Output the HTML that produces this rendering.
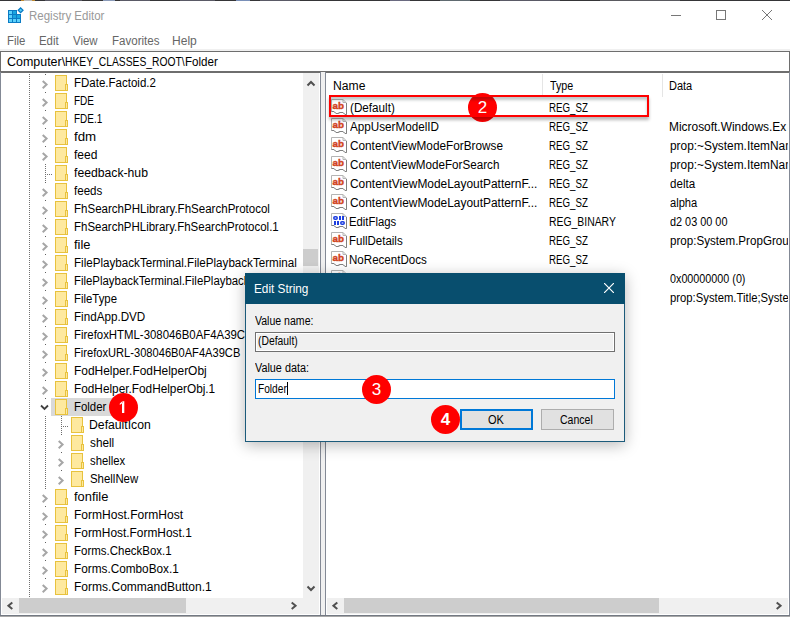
<!DOCTYPE html>
<html><head><meta charset="utf-8">
<style>
*{margin:0;padding:0;box-sizing:border-box}
html,body{width:790px;height:617px;overflow:hidden;background:#fff}
body{position:relative;font-family:"Liberation Sans",sans-serif;font-size:12px;color:#000}
.a{position:absolute}
.t{position:absolute;white-space:nowrap;line-height:14px;transform-origin:0 0}
</style></head><body>
<div class="a" style="left:0;top:0;width:790px;height:1px;background:#353537"></div>
<div class="a" style="left:21px;top:0;width:3px;height:1px;background:#c08a30"></div>
<div class="a" style="left:24px;top:0;width:8px;height:1px;background:#b8b8b8"></div>
<div class="a" style="left:32px;top:0;width:3px;height:1px;background:#c08a30"></div>
<div class="a" style="left:45px;top:0;width:37px;height:1px;background:#5a5a66"></div>
<div class="a" style="left:103px;top:0;width:12px;height:1px;background:#8a9ab8"></div>
<div class="a" style="left:120px;top:0;width:30px;height:1px;background:#5a5a66"></div>
<div class="a" style="left:180px;top:0;width:35px;height:1px;background:#5a5a66"></div>
<div class="a" style="left:236px;top:0;width:14px;height:1px;background:#7a90b8"></div>
<div class="a" style="left:260px;top:0;width:40px;height:1px;background:#5a5a66"></div>
<div class="a" style="left:390px;top:0;width:20px;height:1px;background:#6a6a80"></div>
<div class="a" style="left:440px;top:0;width:30px;height:1px;background:#606a70"></div>
<div class="a" style="left:500px;top:0;width:60px;height:1px;background:#5a5a66"></div>
<div class="a" style="left:600px;top:0;width:80px;height:1px;background:#5a5a60"></div>
<svg class="a" style="left:0;top:0" width="30" height="30" viewBox="0 0 30 30" shape-rendering="crispEdges">
<path d="M8 10H17V14H21V23H8Z" fill="#0b7bc4"/>
<g fill="#5bd0fa"><rect x="9" y="11" width="3" height="3"/><rect x="9" y="15" width="3" height="3"/><rect x="9" y="19" width="3" height="3"/><rect x="13" y="19" width="3" height="3"/><rect x="17" y="19" width="3" height="3"/></g>
<g fill="#1aa6e0"><rect x="13" y="11" width="3" height="3"/><rect x="13" y="15" width="3" height="3"/><rect x="17" y="15" width="3" height="3"/></g>
</svg>
<svg class="a" style="left:0;top:0" width="30" height="30" viewBox="0 0 30 30"><path d="M20.6 7.9L23 10.3L20.6 12.7L18.2 10.3Z" fill="#5bd0fa" stroke="#0b7bc4" stroke-width="1.3"/></svg>
<div class="t" style="left:29.04px;top:9px;font-size:12px;color:#999;transform:scaleX(0.9577);">Registry Editor</div>
<div class="a" style="left:671px;top:15px;width:10px;height:1px;background:#777"></div>
<div class="a" style="left:716px;top:10px;width:10px;height:10px;border:1px solid #777"></div>
<svg class="a" style="left:762px;top:10px" width="10" height="10"><path d="M0 0L10 10M10 0L0 10" stroke="#777" stroke-width="1"/></svg>
<div class="t" style="left:6.65px;top:34px;font-size:12px;color:#666;transform:scaleX(0.9500);">File</div>
<div class="t" style="left:38.95px;top:34px;font-size:12px;color:#666;transform:scaleX(0.9500);">Edit</div>
<div class="t" style="left:73.40px;top:34px;font-size:12px;color:#666;transform:scaleX(0.9500);">View</div>
<div class="t" style="left:111.74px;top:34px;font-size:12px;color:#666;transform:scaleX(0.9625);">Favorites</div>
<div class="t" style="left:172.40px;top:34px;font-size:12px;color:#666;transform:scaleX(1.0042);">Help</div>
<div class="a" style="left:0;top:49px;width:790px;height:2px;background:#f0f0f0"></div>
<div class="a" style="left:0;top:51px;width:790px;height:22px;border:1px solid #6e6e6e;border-bottom:2px solid #6e6e6e"></div>
<div class="t" style="left:6.70px;top:55px;font-size:12px;color:#000;transform:scaleX(1.0375);">Computer\</div>
<div class="t" style="left:65.34px;top:55px;font-size:12px;color:#000;transform:scaleX(0.8583);">HKEY_CLASSES_ROOT\</div>
<div class="t" style="left:185.33px;top:55px;font-size:12px;color:#000;transform:scaleX(0.9667);">Folder</div>
<div class="a" style="left:0;top:72px;width:321px;height:545px;border-left:1px solid #838995;border-right:1px solid #838995"></div>
<div class="a" style="left:321px;top:72px;width:4px;height:545px;background:#f0f0f0"></div>
<div class="a" style="left:325px;top:72px;width:465px;height:545px;border-left:1px solid #838995;border-right:1px solid #838995"></div>
<div class="a" style="left:0;top:615px;width:790px;height:1px;background:#737983"></div><div class="a" style="left:0;top:616px;width:790px;height:1px;background:#a8a8a8"></div>
<div class="a" style="left:29px;top:74px;width:1px;height:523px;background:repeating-linear-gradient(#707070 0 1px,transparent 1px 2px)"></div>
<div class="a" style="left:45px;top:74px;width:1px;height:1px;background:#606060"></div>
<svg class="a" style="left:42px;top:80px" width="8" height="10"><path d="M0.7 0.9L4.6 4.6L0.7 8.3" stroke="#a6a6a6" stroke-width="2" fill="none"/></svg>
<svg class="a" style="left:55px;top:75px" width="13" height="16" viewBox="0 0 13 16"><rect x="0.5" y="0.5" width="11" height="15" fill="#fee99f" stroke="#e8c23e"/><rect x="10.5" y="9.5" width="2" height="6" fill="#fee99f" stroke="#e8c23e"/></svg>
<div class="t" style="left:73.54px;top:76px;font-size:12px;color:#000;transform:scaleX(0.9595);">FDate.Factoid.2</div>
<div class="a" style="left:45px;top:92px;width:1px;height:1px;background:#606060"></div>
<svg class="a" style="left:42px;top:98px" width="8" height="10"><path d="M0.7 0.9L4.6 4.6L0.7 8.3" stroke="#a6a6a6" stroke-width="2" fill="none"/></svg>
<svg class="a" style="left:55px;top:93px" width="13" height="16" viewBox="0 0 13 16"><rect x="0.5" y="0.5" width="11" height="15" fill="#fee99f" stroke="#e8c23e"/><rect x="10.5" y="9.5" width="2" height="6" fill="#fee99f" stroke="#e8c23e"/></svg>
<div class="t" style="left:73.67px;top:94px;font-size:12px;color:#000;transform:scaleX(0.8348);">FDE</div>
<div class="a" style="left:45px;top:110px;width:1px;height:1px;background:#606060"></div>
<svg class="a" style="left:42px;top:116px" width="8" height="10"><path d="M0.7 0.9L4.6 4.6L0.7 8.3" stroke="#a6a6a6" stroke-width="2" fill="none"/></svg>
<svg class="a" style="left:55px;top:111px" width="13" height="16" viewBox="0 0 13 16"><rect x="0.5" y="0.5" width="11" height="15" fill="#fee99f" stroke="#e8c23e"/><rect x="10.5" y="9.5" width="2" height="6" fill="#fee99f" stroke="#e8c23e"/></svg>
<div class="t" style="left:73.67px;top:112px;font-size:12px;color:#000;transform:scaleX(0.8303);">FDE.1</div>
<div class="a" style="left:45px;top:128px;width:1px;height:1px;background:#606060"></div>
<svg class="a" style="left:42px;top:134px" width="8" height="10"><path d="M0.7 0.9L4.6 4.6L0.7 8.3" stroke="#a6a6a6" stroke-width="2" fill="none"/></svg>
<svg class="a" style="left:55px;top:129px" width="13" height="16" viewBox="0 0 13 16"><rect x="0.5" y="0.5" width="11" height="15" fill="#fee99f" stroke="#e8c23e"/><rect x="10.5" y="9.5" width="2" height="6" fill="#fee99f" stroke="#e8c23e"/></svg>
<div class="t" style="left:73.60px;top:130px;font-size:12px;color:#000;transform:scaleX(1.1100);">fdm</div>
<div class="a" style="left:45px;top:146px;width:1px;height:1px;background:#606060"></div>
<svg class="a" style="left:42px;top:152px" width="8" height="10"><path d="M0.7 0.9L4.6 4.6L0.7 8.3" stroke="#a6a6a6" stroke-width="2" fill="none"/></svg>
<svg class="a" style="left:55px;top:147px" width="13" height="16" viewBox="0 0 13 16"><rect x="0.5" y="0.5" width="11" height="15" fill="#fee99f" stroke="#e8c23e"/><rect x="10.5" y="9.5" width="2" height="6" fill="#fee99f" stroke="#e8c23e"/></svg>
<div class="t" style="left:73.60px;top:148px;font-size:12px;color:#000;transform:scaleX(1.0043);">feed</div>
<div class="a" style="left:45px;top:164px;width:1px;height:19px;background:repeating-linear-gradient(#707070 0 1px,transparent 1px 2px)"></div>
<div class="a" style="left:47px;top:174px;width:6px;height:1px;background:repeating-linear-gradient(90deg,#707070 0 1px,transparent 1px 2px)"></div>
<svg class="a" style="left:55px;top:165px" width="13" height="16" viewBox="0 0 13 16"><rect x="0.5" y="0.5" width="11" height="15" fill="#fee99f" stroke="#e8c23e"/><rect x="10.5" y="9.5" width="2" height="6" fill="#fee99f" stroke="#e8c23e"/></svg>
<div class="t" style="left:73.60px;top:166px;font-size:12px;color:#000;transform:scaleX(1.0164);">feedback-hub</div>
<div class="a" style="left:45px;top:182px;width:1px;height:1px;background:#606060"></div>
<svg class="a" style="left:42px;top:188px" width="8" height="10"><path d="M0.7 0.9L4.6 4.6L0.7 8.3" stroke="#a6a6a6" stroke-width="2" fill="none"/></svg>
<svg class="a" style="left:55px;top:183px" width="13" height="16" viewBox="0 0 13 16"><rect x="0.5" y="0.5" width="11" height="15" fill="#fee99f" stroke="#e8c23e"/><rect x="10.5" y="9.5" width="2" height="6" fill="#fee99f" stroke="#e8c23e"/></svg>
<div class="t" style="left:73.60px;top:184px;font-size:12px;color:#000;transform:scaleX(0.9655);">feeds</div>
<div class="a" style="left:45px;top:200px;width:1px;height:1px;background:#606060"></div>
<svg class="a" style="left:42px;top:206px" width="8" height="10"><path d="M0.7 0.9L4.6 4.6L0.7 8.3" stroke="#a6a6a6" stroke-width="2" fill="none"/></svg>
<svg class="a" style="left:55px;top:201px" width="13" height="16" viewBox="0 0 13 16"><rect x="0.5" y="0.5" width="11" height="15" fill="#fee99f" stroke="#e8c23e"/><rect x="10.5" y="9.5" width="2" height="6" fill="#fee99f" stroke="#e8c23e"/></svg>
<div class="t" style="left:73.54px;top:202px;font-size:12px;color:#000;transform:scaleX(0.9611);">FhSearchPHLibrary.FhSearchProtocol</div>
<div class="a" style="left:45px;top:218px;width:1px;height:1px;background:#606060"></div>
<svg class="a" style="left:42px;top:224px" width="8" height="10"><path d="M0.7 0.9L4.6 4.6L0.7 8.3" stroke="#a6a6a6" stroke-width="2" fill="none"/></svg>
<svg class="a" style="left:55px;top:219px" width="13" height="16" viewBox="0 0 13 16"><rect x="0.5" y="0.5" width="11" height="15" fill="#fee99f" stroke="#e8c23e"/><rect x="10.5" y="9.5" width="2" height="6" fill="#fee99f" stroke="#e8c23e"/></svg>
<div class="t" style="left:73.54px;top:220px;font-size:12px;color:#000;transform:scaleX(0.9573);">FhSearchPHLibrary.FhSearchProtocol.1</div>
<div class="a" style="left:45px;top:236px;width:1px;height:1px;background:#606060"></div>
<svg class="a" style="left:42px;top:242px" width="8" height="10"><path d="M0.7 0.9L4.6 4.6L0.7 8.3" stroke="#a6a6a6" stroke-width="2" fill="none"/></svg>
<svg class="a" style="left:55px;top:237px" width="13" height="16" viewBox="0 0 13 16"><rect x="0.5" y="0.5" width="11" height="15" fill="#fee99f" stroke="#e8c23e"/><rect x="10.5" y="9.5" width="2" height="6" fill="#fee99f" stroke="#e8c23e"/></svg>
<div class="t" style="left:73.60px;top:238px;font-size:12px;color:#000;transform:scaleX(1.0733);">file</div>
<div class="a" style="left:45px;top:254px;width:1px;height:1px;background:#606060"></div>
<svg class="a" style="left:42px;top:260px" width="8" height="10"><path d="M0.7 0.9L4.6 4.6L0.7 8.3" stroke="#a6a6a6" stroke-width="2" fill="none"/></svg>
<svg class="a" style="left:55px;top:255px" width="13" height="16" viewBox="0 0 13 16"><rect x="0.5" y="0.5" width="11" height="15" fill="#fee99f" stroke="#e8c23e"/><rect x="10.5" y="9.5" width="2" height="6" fill="#fee99f" stroke="#e8c23e"/></svg>
<div class="t" style="left:73.53px;top:256px;font-size:12px;color:#000;transform:scaleX(0.9686);">FilePlaybackTerminal.FilePlaybackTerminal</div>
<div class="a" style="left:45px;top:272px;width:1px;height:1px;background:#606060"></div>
<svg class="a" style="left:42px;top:278px" width="8" height="10"><path d="M0.7 0.9L4.6 4.6L0.7 8.3" stroke="#a6a6a6" stroke-width="2" fill="none"/></svg>
<svg class="a" style="left:55px;top:273px" width="13" height="16" viewBox="0 0 13 16"><rect x="0.5" y="0.5" width="11" height="15" fill="#fee99f" stroke="#e8c23e"/><rect x="10.5" y="9.5" width="2" height="6" fill="#fee99f" stroke="#e8c23e"/></svg>
<div class="t" style="left:73.55px;top:274px;font-size:12px;color:#000;transform:scaleX(0.9500);">FilePlaybackTerminal.FilePlaybackTerminal.1</div>
<div class="a" style="left:45px;top:290px;width:1px;height:1px;background:#606060"></div>
<svg class="a" style="left:42px;top:296px" width="8" height="10"><path d="M0.7 0.9L4.6 4.6L0.7 8.3" stroke="#a6a6a6" stroke-width="2" fill="none"/></svg>
<svg class="a" style="left:55px;top:291px" width="13" height="16" viewBox="0 0 13 16"><rect x="0.5" y="0.5" width="11" height="15" fill="#fee99f" stroke="#e8c23e"/><rect x="10.5" y="9.5" width="2" height="6" fill="#fee99f" stroke="#e8c23e"/></svg>
<div class="t" style="left:73.55px;top:292px;font-size:12px;color:#000;transform:scaleX(0.9477);">FileType</div>
<div class="a" style="left:45px;top:308px;width:1px;height:1px;background:#606060"></div>
<svg class="a" style="left:42px;top:314px" width="8" height="10"><path d="M0.7 0.9L4.6 4.6L0.7 8.3" stroke="#a6a6a6" stroke-width="2" fill="none"/></svg>
<svg class="a" style="left:55px;top:309px" width="13" height="16" viewBox="0 0 13 16"><rect x="0.5" y="0.5" width="11" height="15" fill="#fee99f" stroke="#e8c23e"/><rect x="10.5" y="9.5" width="2" height="6" fill="#fee99f" stroke="#e8c23e"/></svg>
<div class="t" style="left:73.53px;top:310px;font-size:12px;color:#000;transform:scaleX(0.9708);">FindApp.DVD</div>
<div class="a" style="left:45px;top:326px;width:1px;height:1px;background:#606060"></div>
<svg class="a" style="left:42px;top:332px" width="8" height="10"><path d="M0.7 0.9L4.6 4.6L0.7 8.3" stroke="#a6a6a6" stroke-width="2" fill="none"/></svg>
<svg class="a" style="left:55px;top:327px" width="13" height="16" viewBox="0 0 13 16"><rect x="0.5" y="0.5" width="11" height="15" fill="#fee99f" stroke="#e8c23e"/><rect x="10.5" y="9.5" width="2" height="6" fill="#fee99f" stroke="#e8c23e"/></svg>
<div class="t" style="left:73.55px;top:328px;font-size:12px;color:#000;transform:scaleX(0.9500);">FirefoxHTML-308046B0AF4A39CB</div>
<div class="a" style="left:45px;top:344px;width:1px;height:1px;background:#606060"></div>
<svg class="a" style="left:42px;top:350px" width="8" height="10"><path d="M0.7 0.9L4.6 4.6L0.7 8.3" stroke="#a6a6a6" stroke-width="2" fill="none"/></svg>
<svg class="a" style="left:55px;top:345px" width="13" height="16" viewBox="0 0 13 16"><rect x="0.5" y="0.5" width="11" height="15" fill="#fee99f" stroke="#e8c23e"/><rect x="10.5" y="9.5" width="2" height="6" fill="#fee99f" stroke="#e8c23e"/></svg>
<div class="t" style="left:73.57px;top:346px;font-size:12px;color:#000;transform:scaleX(0.9270);">FirefoxURL-308046B0AF4A39CB</div>
<div class="a" style="left:45px;top:362px;width:1px;height:1px;background:#606060"></div>
<svg class="a" style="left:42px;top:368px" width="8" height="10"><path d="M0.7 0.9L4.6 4.6L0.7 8.3" stroke="#a6a6a6" stroke-width="2" fill="none"/></svg>
<svg class="a" style="left:55px;top:363px" width="13" height="16" viewBox="0 0 13 16"><rect x="0.5" y="0.5" width="11" height="15" fill="#fee99f" stroke="#e8c23e"/><rect x="10.5" y="9.5" width="2" height="6" fill="#fee99f" stroke="#e8c23e"/></svg>
<div class="t" style="left:73.51px;top:364px;font-size:12px;color:#000;transform:scaleX(0.9947);">FodHelper.FodHelperObj</div>
<div class="a" style="left:45px;top:380px;width:1px;height:1px;background:#606060"></div>
<svg class="a" style="left:42px;top:386px" width="8" height="10"><path d="M0.7 0.9L4.6 4.6L0.7 8.3" stroke="#a6a6a6" stroke-width="2" fill="none"/></svg>
<svg class="a" style="left:55px;top:381px" width="13" height="16" viewBox="0 0 13 16"><rect x="0.5" y="0.5" width="11" height="15" fill="#fee99f" stroke="#e8c23e"/><rect x="10.5" y="9.5" width="2" height="6" fill="#fee99f" stroke="#e8c23e"/></svg>
<div class="t" style="left:73.52px;top:382px;font-size:12px;color:#000;transform:scaleX(0.9845);">FodHelper.FodHelperObj.1</div>
<div class="a" style="left:51px;top:398px;width:64px;height:18px;background:#d9d9d9"></div>
<div class="a" style="left:45px;top:398px;width:1px;height:1px;background:#606060"></div>
<svg class="a" style="left:40px;top:404px" width="10" height="8"><path d="M1 1.5L4.5 5L8 1.5" stroke="#404040" stroke-width="1.8" fill="none"/></svg>
<svg class="a" style="left:55px;top:399px" width="13" height="16" viewBox="0 0 13 16"><rect x="0.5" y="0.5" width="11" height="15" fill="#fee99f" stroke="#e8c23e"/><rect x="10.5" y="9.5" width="2" height="6" fill="#fee99f" stroke="#e8c23e"/></svg>
<div class="t" style="left:73.55px;top:400px;font-size:12px;color:#000;transform:scaleX(0.9500);">Folder</div>
<div class="a" style="left:61px;top:416px;width:1px;height:19px;background:repeating-linear-gradient(#707070 0 1px,transparent 1px 2px)"></div>
<div class="a" style="left:63px;top:426px;width:6px;height:1px;background:repeating-linear-gradient(90deg,#707070 0 1px,transparent 1px 2px)"></div>
<div class="a" style="left:45px;top:416px;width:1px;height:19px;background:repeating-linear-gradient(#707070 0 1px,transparent 1px 2px)"></div>
<svg class="a" style="left:71px;top:417px" width="13" height="16" viewBox="0 0 13 16"><rect x="0.5" y="0.5" width="11" height="15" fill="#fee99f" stroke="#e8c23e"/><rect x="10.5" y="9.5" width="2" height="6" fill="#fee99f" stroke="#e8c23e"/></svg>
<div class="t" style="left:89.28px;top:418px;font-size:12px;color:#000;transform:scaleX(1.0186);">DefaultIcon</div>
<div class="a" style="left:61px;top:434px;width:1px;height:1px;background:#606060"></div>
<svg class="a" style="left:58px;top:440px" width="8" height="10"><path d="M0.7 0.9L4.6 4.6L0.7 8.3" stroke="#a6a6a6" stroke-width="2" fill="none"/></svg>
<div class="a" style="left:45px;top:434px;width:1px;height:19px;background:repeating-linear-gradient(#707070 0 1px,transparent 1px 2px)"></div>
<svg class="a" style="left:71px;top:435px" width="13" height="16" viewBox="0 0 13 16"><rect x="0.5" y="0.5" width="11" height="15" fill="#fee99f" stroke="#e8c23e"/><rect x="10.5" y="9.5" width="2" height="6" fill="#fee99f" stroke="#e8c23e"/></svg>
<div class="t" style="left:90.30px;top:436px;font-size:12px;color:#000;transform:scaleX(0.9792);">shell</div>
<div class="a" style="left:61px;top:452px;width:1px;height:1px;background:#606060"></div>
<svg class="a" style="left:58px;top:458px" width="8" height="10"><path d="M0.7 0.9L4.6 4.6L0.7 8.3" stroke="#a6a6a6" stroke-width="2" fill="none"/></svg>
<div class="a" style="left:45px;top:452px;width:1px;height:19px;background:repeating-linear-gradient(#707070 0 1px,transparent 1px 2px)"></div>
<svg class="a" style="left:71px;top:453px" width="13" height="16" viewBox="0 0 13 16"><rect x="0.5" y="0.5" width="11" height="15" fill="#fee99f" stroke="#e8c23e"/><rect x="10.5" y="9.5" width="2" height="6" fill="#fee99f" stroke="#e8c23e"/></svg>
<div class="t" style="left:90.30px;top:454px;font-size:12px;color:#000;transform:scaleX(0.9405);">shellex</div>
<div class="a" style="left:61px;top:470px;width:1px;height:1px;background:#606060"></div>
<svg class="a" style="left:58px;top:476px" width="8" height="10"><path d="M0.7 0.9L4.6 4.6L0.7 8.3" stroke="#a6a6a6" stroke-width="2" fill="none"/></svg>
<div class="a" style="left:45px;top:470px;width:1px;height:19px;background:repeating-linear-gradient(#707070 0 1px,transparent 1px 2px)"></div>
<svg class="a" style="left:71px;top:471px" width="13" height="16" viewBox="0 0 13 16"><rect x="0.5" y="0.5" width="11" height="15" fill="#fee99f" stroke="#e8c23e"/><rect x="10.5" y="9.5" width="2" height="6" fill="#fee99f" stroke="#e8c23e"/></svg>
<div class="t" style="left:90.30px;top:472px;font-size:12px;color:#000;transform:scaleX(0.9510);">ShellNew</div>
<div class="a" style="left:45px;top:488px;width:1px;height:1px;background:#606060"></div>
<svg class="a" style="left:42px;top:494px" width="8" height="10"><path d="M0.7 0.9L4.6 4.6L0.7 8.3" stroke="#a6a6a6" stroke-width="2" fill="none"/></svg>
<svg class="a" style="left:55px;top:489px" width="13" height="16" viewBox="0 0 13 16"><rect x="0.5" y="0.5" width="11" height="15" fill="#fee99f" stroke="#e8c23e"/><rect x="10.5" y="9.5" width="2" height="6" fill="#fee99f" stroke="#e8c23e"/></svg>
<div class="t" style="left:73.60px;top:490px;font-size:12px;color:#000;transform:scaleX(1.0719);">fonfile</div>
<div class="a" style="left:45px;top:506px;width:1px;height:1px;background:#606060"></div>
<svg class="a" style="left:42px;top:512px" width="8" height="10"><path d="M0.7 0.9L4.6 4.6L0.7 8.3" stroke="#a6a6a6" stroke-width="2" fill="none"/></svg>
<svg class="a" style="left:55px;top:507px" width="13" height="16" viewBox="0 0 13 16"><rect x="0.5" y="0.5" width="11" height="15" fill="#fee99f" stroke="#e8c23e"/><rect x="10.5" y="9.5" width="2" height="6" fill="#fee99f" stroke="#e8c23e"/></svg>
<div class="t" style="left:73.50px;top:508px;font-size:12px;color:#000;transform:scaleX(1.0037);">FormHost.FormHost</div>
<div class="a" style="left:45px;top:524px;width:1px;height:1px;background:#606060"></div>
<svg class="a" style="left:42px;top:530px" width="8" height="10"><path d="M0.7 0.9L4.6 4.6L0.7 8.3" stroke="#a6a6a6" stroke-width="2" fill="none"/></svg>
<svg class="a" style="left:55px;top:525px" width="13" height="16" viewBox="0 0 13 16"><rect x="0.5" y="0.5" width="11" height="15" fill="#fee99f" stroke="#e8c23e"/><rect x="10.5" y="9.5" width="2" height="6" fill="#fee99f" stroke="#e8c23e"/></svg>
<div class="t" style="left:73.51px;top:526px;font-size:12px;color:#000;transform:scaleX(0.9924);">FormHost.FormHost.1</div>
<div class="a" style="left:45px;top:542px;width:1px;height:1px;background:#606060"></div>
<svg class="a" style="left:42px;top:548px" width="8" height="10"><path d="M0.7 0.9L4.6 4.6L0.7 8.3" stroke="#a6a6a6" stroke-width="2" fill="none"/></svg>
<svg class="a" style="left:55px;top:543px" width="13" height="16" viewBox="0 0 13 16"><rect x="0.5" y="0.5" width="11" height="15" fill="#fee99f" stroke="#e8c23e"/><rect x="10.5" y="9.5" width="2" height="6" fill="#fee99f" stroke="#e8c23e"/></svg>
<div class="t" style="left:73.54px;top:544px;font-size:12px;color:#000;transform:scaleX(0.9574);">Forms.CheckBox.1</div>
<div class="a" style="left:45px;top:560px;width:1px;height:1px;background:#606060"></div>
<svg class="a" style="left:42px;top:566px" width="8" height="10"><path d="M0.7 0.9L4.6 4.6L0.7 8.3" stroke="#a6a6a6" stroke-width="2" fill="none"/></svg>
<svg class="a" style="left:55px;top:561px" width="13" height="16" viewBox="0 0 13 16"><rect x="0.5" y="0.5" width="11" height="15" fill="#fee99f" stroke="#e8c23e"/><rect x="10.5" y="9.5" width="2" height="6" fill="#fee99f" stroke="#e8c23e"/></svg>
<div class="t" style="left:73.52px;top:562px;font-size:12px;color:#000;transform:scaleX(0.9821);">Forms.ComboBox.1</div>
<div class="a" style="left:45px;top:578px;width:1px;height:1px;background:#606060"></div>
<svg class="a" style="left:42px;top:584px" width="8" height="10"><path d="M0.7 0.9L4.6 4.6L0.7 8.3" stroke="#a6a6a6" stroke-width="2" fill="none"/></svg>
<svg class="a" style="left:55px;top:579px" width="13" height="16" viewBox="0 0 13 16"><rect x="0.5" y="0.5" width="11" height="15" fill="#fee99f" stroke="#e8c23e"/><rect x="10.5" y="9.5" width="2" height="6" fill="#fee99f" stroke="#e8c23e"/></svg>
<div class="t" style="left:74.30px;top:580px;font-size:12px;color:#000;transform:scaleX(1.0029);">Forms.CommandButton.1</div>
<div class="a" style="left:303px;top:73px;width:16px;height:541px;background:#f0f0f0"></div>
<div class="a" style="left:303px;top:249px;width:15px;height:17px;background:#cdcdcd"></div>
<svg class="a" style="left:306px;top:79px" width="10" height="8"><path d="M1.5 6.5L5 3L8.5 6.5" stroke="#505050" stroke-width="2" fill="none"/></svg>
<svg class="a" style="left:306px;top:585px" width="10" height="8"><path d="M1.5 1.5L5 5L8.5 1.5" stroke="#505050" stroke-width="2" fill="none"/></svg>
<div class="a" style="left:2px;top:598px;width:301px;height:16px;background:#f0f0f0"></div>
<div class="a" style="left:19px;top:598px;width:167px;height:15px;background:#cdcdcd"></div>
<svg class="a" style="left:6px;top:601px" width="8" height="10"><path d="M6.3 1.5L2.4 4.8L6.3 8.1" stroke="#505050" stroke-width="2" fill="none"/></svg>
<svg class="a" style="left:290px;top:601px" width="8" height="10"><path d="M1.7 1.5L5.6 4.8L1.7 8.1" stroke="#505050" stroke-width="2" fill="none"/></svg>
<div class="t" style="left:332.59px;top:79px;font-size:12px;color:#000;transform:scaleX(1.0129);">Name</div>
<div class="t" style="left:549.60px;top:79px;font-size:12px;color:#000;transform:scaleX(0.8923);">Type</div>
<div class="t" style="left:668.68px;top:79px;font-size:12px;color:#000;transform:scaleX(0.9160);">Data</div>
<div class="a" style="left:542px;top:74px;width:1px;height:23px;background:#e5e5e5"></div>
<div class="a" style="left:662px;top:74px;width:1px;height:23px;background:#e5e5e5"></div>
<svg class="a" style="left:331px;top:99px" width="16" height="16" viewBox="0 0 16 16"><path d="M0.5 12.5V0.5H12L15.5 4V15.5H14L12 13.5H9L7 14.5H5L3 12.5Z" fill="#fff" stroke="#b4b4b4"/><path d="M12 0.5V3.5H15" fill="none" stroke="#b4b4b4"/><path d="M0.5 12.5H3L5 14.5H7L9 13.5H12L14 15.5H15.5V4" fill="none" stroke="#808080"/><text x="1.6" y="10.2" font-family="Liberation Sans" font-weight="bold" font-size="9.8" fill="#d0441e" stroke="#d0441e" stroke-width="0.45">ab</text></svg>
<div class="t" style="left:349.80px;top:101px;font-size:12px;color:#000;transform:scaleX(0.9739);">(Default)</div>
<div class="t" style="left:548.79px;top:101px;font-size:12px;color:#000;transform:scaleX(0.8106);">REG_SZ</div>
<svg class="a" style="left:331px;top:118px" width="16" height="16" viewBox="0 0 16 16"><path d="M0.5 12.5V0.5H12L15.5 4V15.5H14L12 13.5H9L7 14.5H5L3 12.5Z" fill="#fff" stroke="#b4b4b4"/><path d="M12 0.5V3.5H15" fill="none" stroke="#b4b4b4"/><path d="M0.5 12.5H3L5 14.5H7L9 13.5H12L14 15.5H15.5V4" fill="none" stroke="#808080"/><text x="1.6" y="10.2" font-family="Liberation Sans" font-weight="bold" font-size="9.8" fill="#d0441e" stroke="#d0441e" stroke-width="0.45">ab</text></svg>
<div class="t" style="left:349.80px;top:120px;font-size:12px;color:#000;transform:scaleX(0.9736);">AppUserModelID</div>
<div class="t" style="left:548.79px;top:120px;font-size:12px;color:#000;transform:scaleX(0.8106);">REG_SZ</div>
<div class="a" style="left:663px;top:116px;width:125px;height:18px;overflow:hidden">
<div class="t" style="left:5.61px;top:4px;font-size:12px;color:#000;transform:scaleX(0.9932);">Microsoft.Windows.Ex<span style="margin-left:1.5px">plorer</span></div>
</div>
<svg class="a" style="left:331px;top:137px" width="16" height="16" viewBox="0 0 16 16"><path d="M0.5 12.5V0.5H12L15.5 4V15.5H14L12 13.5H9L7 14.5H5L3 12.5Z" fill="#fff" stroke="#b4b4b4"/><path d="M12 0.5V3.5H15" fill="none" stroke="#b4b4b4"/><path d="M0.5 12.5H3L5 14.5H7L9 13.5H12L14 15.5H15.5V4" fill="none" stroke="#808080"/><text x="1.6" y="10.2" font-family="Liberation Sans" font-weight="bold" font-size="9.8" fill="#d0441e" stroke="#d0441e" stroke-width="0.45">ab</text></svg>
<div class="t" style="left:349.80px;top:139px;font-size:12px;color:#000;transform:scaleX(0.9814);">ContentViewModeForBrowse</div>
<div class="t" style="left:548.79px;top:139px;font-size:12px;color:#000;transform:scaleX(0.8106);">REG_SZ</div>
<div class="a" style="left:663px;top:135px;width:125px;height:18px;overflow:hidden">
<div class="t" style="left:6.60px;top:4px;font-size:12px;color:#000;transform:scaleX(0.9897);">prop:~System.ItemNameDisplay</div>
</div>
<svg class="a" style="left:331px;top:156px" width="16" height="16" viewBox="0 0 16 16"><path d="M0.5 12.5V0.5H12L15.5 4V15.5H14L12 13.5H9L7 14.5H5L3 12.5Z" fill="#fff" stroke="#b4b4b4"/><path d="M12 0.5V3.5H15" fill="none" stroke="#b4b4b4"/><path d="M0.5 12.5H3L5 14.5H7L9 13.5H12L14 15.5H15.5V4" fill="none" stroke="#808080"/><text x="1.6" y="10.2" font-family="Liberation Sans" font-weight="bold" font-size="9.8" fill="#d0441e" stroke="#d0441e" stroke-width="0.45">ab</text></svg>
<div class="t" style="left:349.80px;top:158px;font-size:12px;color:#000;transform:scaleX(0.9708);">ContentViewModeForSearch</div>
<div class="t" style="left:548.79px;top:158px;font-size:12px;color:#000;transform:scaleX(0.8106);">REG_SZ</div>
<div class="a" style="left:663px;top:154px;width:125px;height:18px;overflow:hidden">
<div class="t" style="left:6.60px;top:4px;font-size:12px;color:#000;transform:scaleX(0.9897);">prop:~System.ItemNameDisplay</div>
</div>
<svg class="a" style="left:331px;top:175px" width="16" height="16" viewBox="0 0 16 16"><path d="M0.5 12.5V0.5H12L15.5 4V15.5H14L12 13.5H9L7 14.5H5L3 12.5Z" fill="#fff" stroke="#b4b4b4"/><path d="M12 0.5V3.5H15" fill="none" stroke="#b4b4b4"/><path d="M0.5 12.5H3L5 14.5H7L9 13.5H12L14 15.5H15.5V4" fill="none" stroke="#808080"/><text x="1.6" y="10.2" font-family="Liberation Sans" font-weight="bold" font-size="9.8" fill="#d0441e" stroke="#d0441e" stroke-width="0.45">ab</text></svg>
<div class="t" style="left:349.80px;top:177px;font-size:12px;color:#000;transform:scaleX(0.9936);">ContentViewModeLayoutPatternF...</div>
<div class="t" style="left:548.79px;top:177px;font-size:12px;color:#000;transform:scaleX(0.8106);">REG_SZ</div>
<div class="a" style="left:663px;top:173px;width:125px;height:18px;overflow:hidden">
<div class="t" style="left:6.60px;top:4px;font-size:12px;color:#000;transform:scaleX(0.9654);">delta</div>
</div>
<svg class="a" style="left:331px;top:194px" width="16" height="16" viewBox="0 0 16 16"><path d="M0.5 12.5V0.5H12L15.5 4V15.5H14L12 13.5H9L7 14.5H5L3 12.5Z" fill="#fff" stroke="#b4b4b4"/><path d="M12 0.5V3.5H15" fill="none" stroke="#b4b4b4"/><path d="M0.5 12.5H3L5 14.5H7L9 13.5H12L14 15.5H15.5V4" fill="none" stroke="#808080"/><text x="1.6" y="10.2" font-family="Liberation Sans" font-weight="bold" font-size="9.8" fill="#d0441e" stroke="#d0441e" stroke-width="0.45">ab</text></svg>
<div class="t" style="left:349.80px;top:196px;font-size:12px;color:#000;transform:scaleX(0.9936);">ContentViewModeLayoutPatternF...</div>
<div class="t" style="left:548.79px;top:196px;font-size:12px;color:#000;transform:scaleX(0.8106);">REG_SZ</div>
<div class="a" style="left:663px;top:192px;width:125px;height:18px;overflow:hidden">
<div class="t" style="left:6.60px;top:4px;font-size:12px;color:#000;transform:scaleX(0.9267);">alpha</div>
</div>
<svg class="a" style="left:331px;top:213px" width="16" height="16" viewBox="0 0 16 16"><path d="M0.5 12.5V0.5H12L15.5 4V15.5H14L12 13.5H9L7 14.5H5L3 12.5Z" fill="#fff" stroke="#b4b4b4"/><path d="M12 0.5V3.5H15" fill="none" stroke="#b4b4b4"/><path d="M0.5 12.5H3L5 14.5H7L9 13.5H12L14 15.5H15.5V4" fill="none" stroke="#808080"/><g fill="#1d3fe0"><rect x="8" y="3" width="2" height="4"/><rect x="11" y="3" width="2" height="4"/><rect x="3" y="8" width="2" height="4"/><rect x="6" y="8" width="2" height="4"/></g><g fill="none" stroke="#1d3fe0" stroke-width="1.5"><rect x="2.75" y="3.75" width="3.5" height="2.5" rx="1.2"/><rect x="9.75" y="8.75" width="3.5" height="2.5" rx="1.2"/></g></svg>
<div class="t" style="left:348.86px;top:215px;font-size:12px;color:#000;transform:scaleX(0.9429);">EditFlags</div>
<div class="t" style="left:548.73px;top:215px;font-size:12px;color:#000;transform:scaleX(0.8671);">REG_BINARY</div>
<div class="a" style="left:663px;top:211px;width:125px;height:18px;overflow:hidden">
<div class="t" style="left:6.60px;top:4px;font-size:12px;color:#000;transform:scaleX(0.9063);">d2 03 00 00</div>
</div>
<svg class="a" style="left:331px;top:232px" width="16" height="16" viewBox="0 0 16 16"><path d="M0.5 12.5V0.5H12L15.5 4V15.5H14L12 13.5H9L7 14.5H5L3 12.5Z" fill="#fff" stroke="#b4b4b4"/><path d="M12 0.5V3.5H15" fill="none" stroke="#b4b4b4"/><path d="M0.5 12.5H3L5 14.5H7L9 13.5H12L14 15.5H15.5V4" fill="none" stroke="#808080"/><text x="1.6" y="10.2" font-family="Liberation Sans" font-weight="bold" font-size="9.8" fill="#d0441e" stroke="#d0441e" stroke-width="0.45">ab</text></svg>
<div class="t" style="left:348.84px;top:234px;font-size:12px;color:#000;transform:scaleX(0.9582);">FullDetails</div>
<div class="t" style="left:548.79px;top:234px;font-size:12px;color:#000;transform:scaleX(0.8106);">REG_SZ</div>
<div class="a" style="left:663px;top:230px;width:125px;height:18px;overflow:hidden">
<div class="t" style="left:6.60px;top:4px;font-size:12px;color:#000;transform:scaleX(0.9672);">prop:System.PropGroup</div>
</div>
<svg class="a" style="left:331px;top:251px" width="16" height="16" viewBox="0 0 16 16"><path d="M0.5 12.5V0.5H12L15.5 4V15.5H14L12 13.5H9L7 14.5H5L3 12.5Z" fill="#fff" stroke="#b4b4b4"/><path d="M12 0.5V3.5H15" fill="none" stroke="#b4b4b4"/><path d="M0.5 12.5H3L5 14.5H7L9 13.5H12L14 15.5H15.5V4" fill="none" stroke="#808080"/><text x="1.6" y="10.2" font-family="Liberation Sans" font-weight="bold" font-size="9.8" fill="#d0441e" stroke="#d0441e" stroke-width="0.45">ab</text></svg>
<div class="t" style="left:348.84px;top:253px;font-size:12px;color:#000;transform:scaleX(0.9637);">NoRecentDocs</div>
<div class="t" style="left:548.79px;top:253px;font-size:12px;color:#000;transform:scaleX(0.8106);">REG_SZ</div>
<svg class="a" style="left:331px;top:270px" width="16" height="16" viewBox="0 0 16 16"><path d="M0.5 12.5V0.5H12L15.5 4V15.5H14L12 13.5H9L7 14.5H5L3 12.5Z" fill="#fff" stroke="#b4b4b4"/><path d="M12 0.5V3.5H15" fill="none" stroke="#b4b4b4"/><path d="M0.5 12.5H3L5 14.5H7L9 13.5H12L14 15.5H15.5V4" fill="none" stroke="#808080"/><text x="1.6" y="10.2" font-family="Liberation Sans" font-weight="bold" font-size="9.8" fill="#d0441e" stroke="#d0441e" stroke-width="0.45">ab</text></svg>
<div class="t" style="left:348.87px;top:272px;font-size:12px;color:#000;transform:scaleX(0.9300);">NoWebView</div>
<div class="a" style="left:663px;top:268px;width:125px;height:18px;overflow:hidden">
<div class="t" style="left:6.60px;top:4px;font-size:12px;color:#000;transform:scaleX(0.8976);">0x00000000 (0)</div>
</div>
<svg class="a" style="left:331px;top:289px" width="16" height="16" viewBox="0 0 16 16"><path d="M0.5 12.5V0.5H12L15.5 4V15.5H14L12 13.5H9L7 14.5H5L3 12.5Z" fill="#fff" stroke="#b4b4b4"/><path d="M12 0.5V3.5H15" fill="none" stroke="#b4b4b4"/><path d="M0.5 12.5H3L5 14.5H7L9 13.5H12L14 15.5H15.5V4" fill="none" stroke="#808080"/><text x="1.6" y="10.2" font-family="Liberation Sans" font-weight="bold" font-size="9.8" fill="#d0441e" stroke="#d0441e" stroke-width="0.45">ab</text></svg>
<div class="t" style="left:348.87px;top:291px;font-size:12px;color:#000;transform:scaleX(0.9300);">PreviewDetails</div>
<div class="a" style="left:663px;top:287px;width:125px;height:18px;overflow:hidden">
<div class="t" style="left:6.60px;top:4px;font-size:12px;color:#000;transform:scaleX(0.9408);">prop:System.Title;System</div>
</div>
<div class="a" style="left:327px;top:598px;width:461px;height:16px;background:#f0f0f0"></div>
<div class="a" style="left:344px;top:598px;width:315px;height:15px;background:#cdcdcd"></div>
<svg class="a" style="left:331px;top:601px" width="8" height="10"><path d="M6.3 1.5L2.4 4.8L6.3 8.1" stroke="#505050" stroke-width="2" fill="none"/></svg>
<svg class="a" style="left:775px;top:601px" width="8" height="10"><path d="M1.7 1.5L5.6 4.8L1.7 8.1" stroke="#505050" stroke-width="2" fill="none"/></svg>
<div class="a" style="left:245px;top:273px;width:380px;height:169px;background:#f0f0f0;border:1px solid #1c5b7b;box-shadow:0 3px 14px rgba(0,0,0,.28)"></div>
<div class="a" style="left:245px;top:273px;width:380px;height:31px;background:#084e6e"></div>
<div class="t" style="left:253.62px;top:282px;font-size:12px;color:#fff;transform:scaleX(0.9833);">Edit String</div>
<svg class="a" style="left:604px;top:283px" width="10" height="10"><path d="M0 0L10 10M10 0L0 10" stroke="#fff" stroke-width="1.2"/></svg>
<div class="t" style="left:255.30px;top:314px;font-size:12px;color:#000;transform:scaleX(0.8788);">Value name:</div>
<div class="a" style="left:255px;top:332px;width:360px;height:20px;background:#f0f0f0;border:1px solid #707070;box-shadow:inset 0 0 0 1px #fff"></div>
<div class="t" style="left:257.90px;top:334px;font-size:12px;color:#000;transform:scaleX(0.8630);">(Default)</div>
<div class="t" style="left:255.30px;top:361px;font-size:12px;color:#000;transform:scaleX(0.9017);">Value data:</div>
<div class="a" style="left:255px;top:379px;width:360px;height:20px;background:#fff;border:1px solid #0078d7"></div>
<div class="t" style="left:257.75px;top:382px;font-size:12px;color:#000;transform:scaleX(0.8455);">Folder</div>
<div class="a" style="left:287px;top:382px;width:1px;height:13px;background:#000"></div>
<div class="a" style="left:460px;top:409px;width:73px;height:21px;background:#e1e1e1;border:2px solid #0078d7"></div>
<div class="t" style="left:488.30px;top:413px;font-size:12px;color:#000;transform:scaleX(0.9176);">OK</div>
<div class="a" style="left:541px;top:409px;width:73px;height:21px;background:#e1e1e1;border:1px solid #adadad"></div>
<div class="t" style="left:560.40px;top:413px;font-size:12px;color:#000;transform:scaleX(0.8784);">Cancel</div>
<div class="a" style="left:108.8px;top:392.8px;width:29.5px;height:29.5px;border-radius:50%;background:#f00"></div>
<svg class="a" style="left:0;top:0" width="200" height="450"><path d="M122 413V401.3H124.3V413Z M122.4 401.3L119.8 403.5V405L122.4 402.9Z" fill="#fff"/></svg>
<div class="a" style="left:467.6px;top:92.7px;width:29.5px;height:29.5px;border-radius:50%;background:#f00"></div>
<div class="t" style="left:467.4px;top:98.9px;width:30px;text-align:center;color:#fff;font-size:17px;line-height:17px;font-weight:normal">2</div>
<div class="a" style="left:329px;top:95px;width:320px;height:22px;border:2px solid #f00;box-shadow:0 3px 3px rgba(0,0,0,.28), inset 0 3px 3px rgba(0,30,30,.25)"></div>
<div class="a" style="left:361.9px;top:374.8px;width:29.5px;height:29.5px;border-radius:50%;background:#f00"></div>
<div class="t" style="left:361.6px;top:381.0px;width:30px;text-align:center;color:#fff;font-size:17px;line-height:17px;font-weight:normal">3</div>
<div class="a" style="left:430.8px;top:404.9px;width:29.5px;height:29.5px;border-radius:50%;background:#f00"></div>
<div class="t" style="left:430.5px;top:411.2px;width:30px;text-align:center;color:#fff;font-size:17px;line-height:17px;font-weight:bold">4</div>
</body></html>
